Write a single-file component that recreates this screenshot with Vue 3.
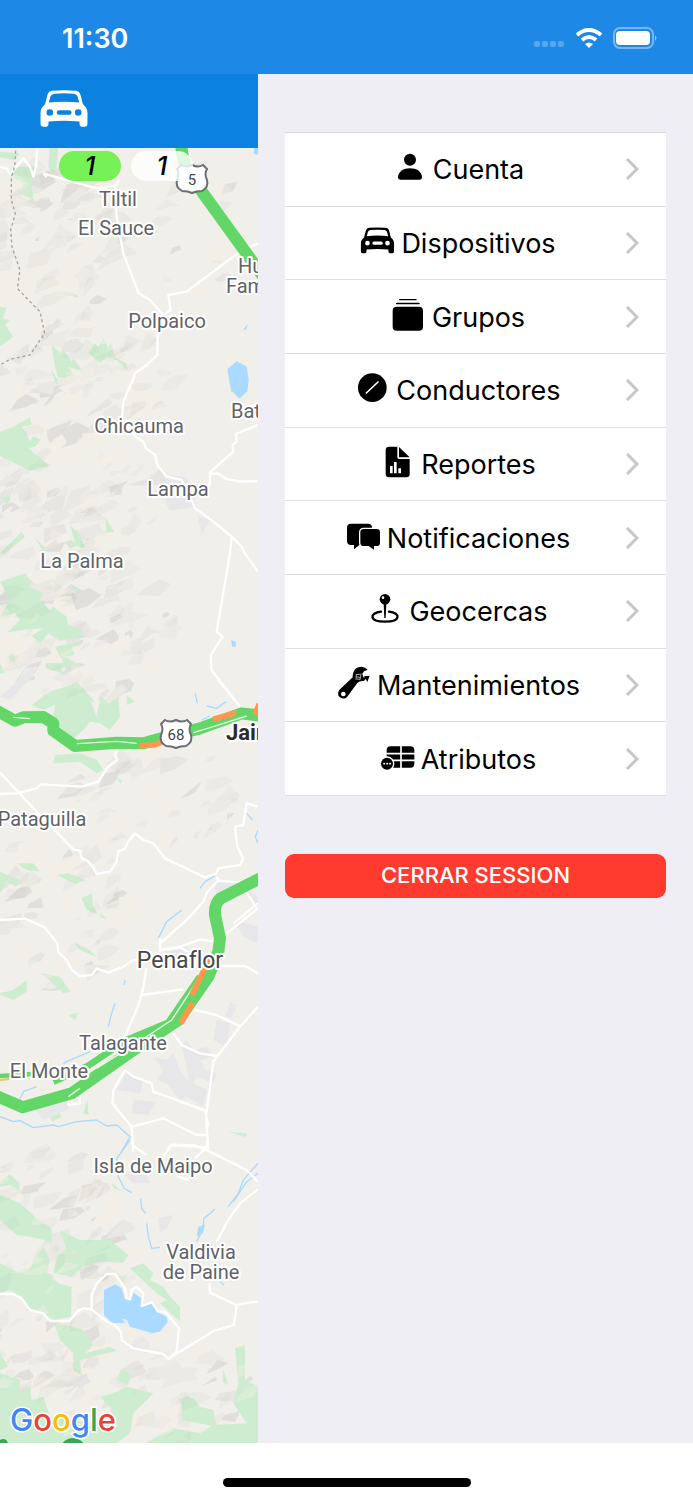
<template>
  <div class="phone">
    <header class="status-bar">
      <time class="clock">11:30</time>
      <div class="status-icons">
        <svg class="signal" viewBox="0 0 32 20">
          <rect v-for="n in 4" :key="n" :x="(n - 1) * 8 + 1" y="13" width="6" height="6" rx="2" />
        </svg>
        <svg class="wifi" viewBox="0 0 28 20">
          <path d="M2 7Q14 -3 26 7" />
          <path d="M7 12Q14 6 21 12" />
          <path class="wifi-dot" d="M10 16Q14 13 18 16L14 20Z" />
        </svg>
        <svg class="battery" viewBox="0 0 44 22">
          <rect class="battery-shell" x="1" y="1" width="39" height="20" rx="6" />
          <rect x="3" y="4" width="34" height="14" rx="4" />
          <path class="battery-cap" d="M42 8Q45 11 42 14Z" />
        </svg>
      </div>
    </header>

    <main class="content">
      <section class="map-pane">
        <div class="map-header">
          <svg class="car-logo" viewBox="0 0 144 112">
            <path fill-rule="evenodd" :d="carPath" />
          </svg>
        </div>

        <div class="map-body">
          <svg class="map" viewBox="0 0 258 1295" preserveAspectRatio="xMinYMin slice">
            <polygon v-for="(shard, i) in shards" :key="`s${i}`" :points="shard.points" :fill="shard.color" />

            <g v-for="area in areas" :key="area.top" :transform="`translate(0 ${area.top}) scale(.33333)`">
              <polygon v-for="(p, i) in area.greens" :key="`g${i}`" class="green" :points="p" />
              <polygon v-for="(p, i) in area.urban" :key="`u${i}`" class="urban" :points="p" />
            </g>

            <polygon v-for="(shard, i) in shades" :key="`h${i}`" :class="i % 2 ? 'shade' : 'light'" :points="shard.points" />

            <g v-for="area in areas" :key="area.top" :transform="`translate(0 ${area.top}) scale(.33333)`">
              <polygon v-for="(p, i) in area.lakes" :key="`l${i}`" class="lake" :points="p" />
              <path v-for="(d, i) in area.rivers" :key="`v${i}`" class="river" :d="d" />
              <path v-for="(d, i) in area.roads" :key="`r${i}`" class="road" :d="d" />
            </g>

            <!-- provincial border -->
            <path class="border-line" transform="translate(0 -78) scale(.33333)" d="M48 225L44 290L34 320L34 390L46 430L32 480L36 530L60 600L52 655L85 690L120 725L134 790L90 855L30 868L0 885" />

            <!-- route 5 -->
            <path class="traffic" transform="translate(0 -78) scale(.33333)" d="M544 220Q544 290 595 350L790 620" />
            <!-- route 68 -->
            <g transform="translate(0 532) scale(.33333)">
              <path class="traffic" d="M-10 92L45 122L70 112L130 111L160 130L160 152L225 198L350 188L430 190L520 165L600 145L725 100L790 108" />
              <path class="lane" d="M230 191L350 184L410 190M580 158L640 140L740 108M40 112L90 116" />
              <path class="jam" d="M418 197L462 195L490 185M640 118L708 98M764 104L778 72" />
            </g>
            <!-- route 78 -->
            <g transform="translate(0 712) scale(.33333)">
              <path class="traffic" d="M790 50L662 115Q643 130 645 165L660 235L655 275L625 350L535 480L400 570L215 700L68 742L-10 708" />
              <path class="traffic side" d="M600 350L505 488L380 540L260 620L160 665" />
              <path class="traffic thin" d="M0 648L95 642" />
              <path class="lane" d="M600 350L515 480L440 530L290 625M205 710L240 685" />
              <path class="jam" d="M635 285L575 405M578 428L542 490" />
              <path class="slow" d="M0 660L28 657" />
            </g>

            <g v-for="shield in shields" :key="shield.name" :transform="`translate(${shield.x} ${shield.y})`">
              <path class="shield" d="M-11 -14Q-6 -11 0 -14Q6 -11 11 -14L15 -10Q12 -5 15 1Q17 8 10 12Q4 12 0 14Q-4 12 -10 12Q-17 8 -15 1Q-12 -5 -15 -10Z" />
              <text class="shield-text" y="6">{{ shield.name }}</text>
            </g>

            <text v-for="label in labels" :key="label.text" :class="['label', label.kind]" :x="label.x" :y="label.y">{{ label.text }}</text>

            <circle class="marker" cx="73" cy="1303" r="13" />
            <circle class="marker" cx="3" cy="1296" r="5" />
            <text class="google" x="10" y="1283"><tspan class="b">G</tspan><tspan class="r">o</tspan><tspan class="y">o</tspan><tspan class="b">g</tspan><tspan class="g">l</tspan><tspan class="r">e</tspan></text>
          </svg>

          <div class="counters">
            <span class="counter online">1</span>
            <span class="counter">1</span>
          </div>
        </div>
      </section>

      <aside class="drawer">
        <nav class="menu">
          <a v-for="item in items" :key="item.label" class="menu-row" href="#">
            <span class="menu-label">
              <svg class="menu-icon" viewBox="0 0 102 108">
                <template v-if="item.icon === 'person'">
                  <circle cx="54" cy="26" r="18" />
                  <path d="M18 79C18 62 35 52 54 52S90 62 90 79Q90 86 82 86H26Q18 86 18 79Z" />
                </template>
                <path v-else-if="item.icon === 'car'" transform="translate(2 7) scale(.7)" fill-rule="evenodd" :d="carPath" />
                <template v-else-if="item.icon === 'groups'">
                  <rect x="24" y="0" width="53" height="4" rx="2" />
                  <rect x="15" y="11" width="71" height="5" rx="2" />
                  <rect x="5" y="23" width="91" height="72" rx="12" />
                </template>
                <template v-else-if="item.icon === 'driver'">
                  <circle cx="52" cy="47" r="43" />
                  <path class="cut" d="M34 63L69 30" />
                </template>
                <template v-else-if="item.icon === 'report'">
                  <path d="M27 2H52V34Q52 39 57 39H89V84Q89 94 79 94H27Q17 94 17 84V12Q17 2 27 2Z" />
                  <path d="M57 3L89 34H57Z" />
                  <path class="bars" d="M34 82V60M46 82V48M59 82V67" />
                </template>
                <template v-else-if="item.icon === 'chat'">
                  <path d="M15 11H66Q78 11 78 23V63Q78 75 66 75H40L24 88V75H15Q3 75 3 63V23Q3 11 15 11Z" />
                  <path class="ringed" d="M54 25H92Q104 25 104 37V68Q104 80 92 80H86V93L67 80H54Q41 80 41 68V37Q41 25 54 25Z" />
                </template>
                <template v-else-if="item.icon === 'pin'">
                  <path class="line" d="M39 56C3 60 3 86 51 86S99 60 63 56" />
                  <path d="M47 32H55L53 75H49Z" />
                  <circle cx="51" cy="19" r="16" />
                  <circle class="hole" cx="45" cy="14" r="4" />
                </template>
                <template v-else-if="item.icon === 'wrench'">
                  <path d="M9 70L50 31C50 10 60 -1 77 -1Q88 0 95 8L84 13L79 20L82 31L91 32L84 42Q70 41 64 48L36 86C29 99 11 96 7 85Q5 77 9 70Z" />
                  <path d="M84 28L94 45L101 26Z" />
                  <circle class="hole" cx="22" cy="81" r="7" />
                  <path class="etch" d="M60 23L76 21M60 29L74 32M61 22L60 38M75 22L72 38M62 36L72 37" />
                </template>
                <template v-else>
                  <rect x="20" y="16" width="83" height="64" rx="12" />
                  <path class="grid" d="M20 38H103M20 58H103M63 16V80" />
                  <circle class="hole" cx="21" cy="68" r="22" />
                  <circle cx="21" cy="68" r="18" />
                  <path class="dots" d="M12 68h1M21 68h1M30 68h1" />
                </template>
              </svg>
              <span>{{ item.label }}</span>
            </span>
            <svg class="chevron" viewBox="0 0 14 22">
              <path d="M2 1L12 11L2 21" />
            </svg>
          </a>
        </nav>
        <button class="logout" type="button">CERRAR SESSION</button>
      </aside>
    </main>

    <footer class="home-bar">
      <span class="home-indicator"></span>
    </footer>
  </div>
</template>

<script setup>
const carPath =
  'M1 70C1 60 4 54 9 49L15 42L20 22C23 8 28 2 38 2Q72 -1 106 2C116 2 121 8 124 22L129 42L135 49C140 54 143 60 143 70V104Q143 111 136 111H126Q119 111 119 104V95Q72 91 25 95V104Q25 111 18 111H8Q1 111 1 104Z' +
  'M26 38L31 20Q33 12 42 11Q72 9 102 11Q111 12 113 20L118 38Q72 33 26 38Z' +
  'M19 68A10 10 0 1 0 39 68A10 10 0 1 0 19 68Z' +
  'M105 68A10 10 0 1 0 125 68A10 10 0 1 0 105 68Z' +
  'M57 61H88Q95 61 95 68T88 75H57Q50 75 50 68T57 61Z'

const items = [
  { label: 'Cuenta', icon: 'person' },
  { label: 'Dispositivos', icon: 'car' },
  { label: 'Grupos', icon: 'groups' },
  { label: 'Conductores', icon: 'driver' },
  { label: 'Reportes', icon: 'report' },
  { label: 'Notificaciones', icon: 'chat' },
  { label: 'Geocercas', icon: 'pin' },
  { label: 'Mantenimientos', icon: 'wrench' },
  { label: 'Atributos', icon: 'table' }
]

const shields = [
  { name: '5', x: 192, y: 31 },
  { name: '68', x: 176, y: 586 }
]

const labels = [
  { text: 'Tiltil', x: 118, y: 58 },
  { text: 'El Sauce', x: 116, y: 87 },
  { text: 'Hu', x: 238, y: 125, kind: 'start' },
  { text: 'Fam', x: 226, y: 145, kind: 'start' },
  { text: 'Polpaico', x: 167, y: 180 },
  { text: 'Bat', x: 231, y: 270, kind: 'start' },
  { text: 'Chicauma', x: 139, y: 285 },
  { text: 'Lampa', x: 178, y: 348 },
  { text: 'La Palma', x: 82, y: 420 },
  { text: 'Jain', x: 226, y: 592, kind: 'bold' },
  { text: 'Pataguilla', x: 42, y: 678 },
  { text: 'Penaflor', x: 180, y: 820, kind: 'big' },
  { text: 'Talagante', x: 123, y: 902 },
  { text: 'El Monte', x: 49, y: 930 },
  { text: 'Isla de Maipo', x: 153, y: 1025 },
  { text: 'Valdivia', x: 201, y: 1111 },
  { text: 'de Paine', x: 201, y: 1131 }
]

const areas = [
  {
    top: -78,
    greens: [
      '150,225 175,225 170,290 155,310 145,290',
      '0,245 60,250 40,270 0,262',
      '45,290 110,290 95,340 100,390 60,370 70,340 35,320',
      '0,710 20,715 8,745 30,750 15,765 40,800 0,830',
      '155,825 180,850 190,840 215,875 220,865 250,905 205,890 220,915 175,925 165,890',
      '265,850 285,820 295,830 310,805 325,835 332,820 350,870 320,860 300,880',
      '340,860 380,880 380,900',
      '150,895 175,930 170,945'
    ],
    lakes: ['682,898 710,874 740,890 746,930 742,965 694,965', '730,778 744,762 738,780', '762,234 774,234 774,254 762,252'],
    roads: [
      'M345 345L350 440L370 550L415 668L450 690L490 735L474 780L472 855L440 885L405 910L385 965',
      'M774 520L720 545L560 665L505 675L512 720L490 735',
      'M0 290L20 296L32 312L70 265L90 290L100 320L108 290L112 225',
      'M130 310L200 330L290 355L345 348L357 330M130 310L140 322'
    ]
  },
  {
    top: 232,
    greens: [
      '0,155 40,140 90,112 95,135 65,140 80,160 90,185 100,168 122,180 105,200 85,205 148,258 90,272 0,228',
      '0,350 30,350 25,375',
      '315,410 342,455 320,458',
      '210,435 240,465 255,505 190,490 225,485',
      '105,475 150,515 130,515',
      '0,520 65,455 75,470 10,525',
      '0,605 75,580 95,605 85,620 130,640 120,660 150,690 160,680 200,710 205,735 248,755 248,770 180,782 145,760 120,790 95,768 130,745 65,750 20,758 60,720 45,700 0,710 30,660',
      '165,800 240,785 215,805 225,825 195,830 240,855 180,865 200,885 137,865 137,850 190,848',
      '20,830 40,820 52,860',
      '0,850 15,880 0,880',
      '130,945 180,935 230,905 285,965 130,965',
      '205,635 235,625 230,638'
    ],
    urban: ['500,285 560,290 590,380 510,392 498,370', '592,408 632,420 605,460', '0,950 100,860 105,880 30,960'],
    lakes: ['694,0 742,0 740,35 718,56 698,35', '693,780 708,785 707,800 697,800'],
    roads: [
      'M398 0L370 65L366 120L405 168L430 185L438 205L465 225L472 255L500 290L545 300L575 360L585 385L640 425L695 470L725 500L735 520L774 575',
      'M774 135L708 162L710 185L698 195L700 215L632 275L628 320M632 280L655 282L680 297L720 304L774 303',
      'M695 470L690 520L650 755L668 770L633 825L634 870L705 960'
    ]
  },
  {
    top: 532,
    greens: [
      '95,75 150,35 230,10 215,30 250,30 270,60 290,110 300,60 300,45 325,70 355,50 360,110 330,150 300,130 270,125 250,150 220,175 190,150 160,110 165,75 130,90',
      '380,45 405,65 380,75',
      '165,225 240,220 290,240 310,270 290,280 240,245 160,250',
      '50,550 100,550 120,575 80,570',
      '0,575 60,600 50,620 20,605 0,640',
      '170,585 205,580 258,600 225,612',
      '245,655 275,640 280,680 295,705 260,690',
      '300,695 320,718 300,712',
      '225,790 270,810 290,830 240,810',
      '350,295 365,300 362,312'
    ],
    urban: ['640,610 720,605 774,650 774,690 740,640 650,640', '700,720 774,740 774,790 730,770'],
    rivers: ['M585 40L592 70M620 78L650 85L678 65M605 120L630 108M600 625L615 605L645 588M475 775L500 725L545 690M740 400L758 420M774 450L766 470L774 490'],
    roads: [
      'M655 0L720 80',
      'M0 342L50 340L110 325L122 313L245 320L295 305L325 260L352 240L345 225L352 205',
      'M0 278L110 395L220 508L240 512L245 535L265 545L278 560L290 582L330 575L350 545L355 515L375 505L385 485L405 460L430 480L460 490L495 535L615 592L650 580L655 565L720 555L730 535L712 500L705 440L730 435L740 370L774 380',
      'M650 590L655 602L720 608L774 690M655 600L620 640L610 665L560 720L480 790L482 815M774 670L700 730'
    ]
  },
  {
    top: 712,
    greens: [
      '0,400 40,390 80,360 80,395 40,420 0,405',
      '125,340 180,350 212,395 190,400',
      '205,465 235,458 225,480',
      '150,770 180,760 185,772 155,785',
      '250,760 262,720 266,765',
      '685,815 740,820 738,832'
    ],
    urban: [
      '500,265 560,260 580,290 490,290',
      '545,555 560,540 580,570 620,560 640,590 600,600 615,630 650,640 640,670 590,650 570,680 560,620',
      '460,590 500,600 520,580 540,630 560,660 620,690 610,740 560,710 540,720 500,670 470,660 490,630',
      '690,425 710,435 695,475 675,470',
      '380,640 430,660 420,700 350,690',
      '400,720 470,725 445,765 395,760',
      '650,480 690,490 680,560 640,540',
      '100,740 200,720 210,745 130,780'
    ],
    rivers: [
      'M0 770L40 785L60 782L100 803L160 795L175 800L230 785L290 780L320 798L350 795L390 830L365 875',
      'M345 430L335 460L325 500M375 360L372 375',
      'M50 740L70 695L110 680M190 612L200 605L270 575'
    ],
    roads: [
      'M0 180L75 176L135 203L172 250L175 275L200 300L215 330L240 348L275 345L290 325L325 338L370 320L400 300L430 300',
      'M480 235L480 270L540 260L600 238L640 245M500 270L540 262L580 285',
      'M440 325L425 405L410 450L365 550M425 405L550 388',
      'M520 520L545 555L600 580L650 588M585 450L650 465L722 500',
      'M774 440L720 500L640 605L618 770L625 870M615 750L625 800',
      'M375 630L340 690L337 730L370 770L395 800L400 875M375 630L400 650L455 670L460 695L615 752',
      'M395 800L490 775L590 825L620 825M500 870L515 855L620 862',
      'M665 318L735 318L774 340M680 220L774 145M205 715L205 735L240 730L240 705'
    ]
  },
  {
    top: 992,
    greens: [
      '0,125 30,103 58,130 58,150 30,135 0,140',
      '0,165 60,190 110,235 155,270 155,305 90,290 50,285 0,240',
      '180,270 240,300 330,300 385,345 370,368 300,365 250,380 215,410 160,400 170,350 200,330',
      '0,370 50,395 90,380 110,345 130,320 150,360 140,400 175,430 215,440 213,530 160,540 130,520 80,500 65,470 30,450 0,460',
      '390,385 430,370 460,400 450,420 490,440 510,470 540,500 540,545 480,490 500,480 470,460',
      '160,545 250,570 280,615 255,640 330,620 350,632 240,660 245,705 220,690 220,640 180,600',
      '300,770 340,760 380,740 460,760 400,820 390,880 350,909 0,909 0,700 60,720 60,760 90,740 95,780 130,770 150,830 280,850 340,840 330,800',
      '365,685 395,705 380,735 350,720',
      '705,625 735,615 735,720 774,740 774,909 440,909 480,885 520,865 600,880 640,855 740,850 700,790 715,730',
      '545,780 580,775 600,800 640,810 650,860 545,840',
      '335,128 365,153 340,145',
      '350,410 380,405 370,440',
      '0,640 25,680 0,690',
      '670,690 685,735 668,725'
    ],
    urban: ['400,600 430,590 450,610 440,640 395,630', '475,235 520,225 500,265 480,280', '370,100 440,105 450,130 400,130'],
    lakes: ['312,450 345,433 365,445 375,478 395,475 400,458 425,475 425,500 455,487 470,515 500,530 503,545 480,575 455,579 390,560 380,540 365,535 375,550 335,548 312,525', '595,260 615,255 608,280 590,290'],
    rivers: ['M390 0L350 55L355 110L372 145L395 158', 'M422 175L425 205L437 220M440 250L445 290L455 325L480 322', 'M645 208L612 235L608 270L590 305', 'M774 70L730 120L715 160L685 200M774 100L740 125L700 185', 'M660 425L672 434'],
    roads: [
      'M0 462L38 462L65 475L90 510L130 520L150 543L208 543L235 512L250 505L275 508L275 465L290 430L320 402L345 402L362 425L375 445L380 475L390 478L395 450L410 440L430 460L425 498L455 487L475 515L495 515L537 565L530 635L505 656',
      'M275 508L320 545L345 555L362 575L365 600L400 625L490 642L505 656L640 573L702 555L710 495L745 488L774 485',
      'M710 495L630 458L628 430M774 148L720 190L685 240L650 305',
      'M395 0L400 18L440 45M490 50L515 14L585 16L640 40L740 90L774 125M585 55L622 20L622 0M530 108L560 118L580 100'
    ]
  }
]

// hill relief: seeded so that the terrain is the same on each load
let seed = 7
const random = () => {
  seed = (seed * 16807) % 2147483647
  return seed / 2147483647
}

const hills = [
  { x: 60, y: 90, rx: 65, ry: 80, count: 60 },
  { x: 200, y: 90, rx: 50, ry: 70, count: 16 },
  { x: 85, y: 230, rx: 90, ry: 65, count: 75 },
  { x: 70, y: 360, rx: 85, ry: 70, count: 70 },
  { x: 85, y: 480, rx: 90, ry: 70, count: 75 },
  { x: 150, y: 650, rx: 95, ry: 50, count: 34 },
  { x: 60, y: 760, rx: 70, ry: 85, count: 50 },
  { x: 50, y: 1120, rx: 85, ry: 130, count: 120 },
  { x: 140, y: 1240, rx: 140, ry: 55, count: 70 }
]
const colors = ['#ebeae5', '#ebeae5', '#e9e8e3', '#f3efe7', '#f2efe7', '#e6e5e1', '#e0dfdb']

const createShards = (share) =>
  hills.flatMap((hill) =>
    Array.from({ length: Math.round(hill.count * share) }, () => {
      const angle = random() * Math.PI * 2
      const reach = Math.sqrt(random())
      const x = hill.x + Math.cos(angle) * reach * hill.rx
      const y = hill.y + Math.sin(angle) * reach * hill.ry
      const size = 4 + random() * 12
      const points = [
        [x - size * (0.5 + random()), y + size * (0.1 + random())],
        [x - size * random(), y - size * random() * 0.5],
        [x + size * random(), y - size * (0.4 + random() * 0.6)],
        [x + size * (0.4 + random()), y - size * random() * 0.4],
        [x + size * 0.3, y + size * random() * 0.6]
      ]
      return {
        points: points.map((p) => p.map(Math.round).join(',')).join(' '),
        color: colors[Math.floor(random() * colors.length)]
      }
    })
  )

const shards = createShards(1)
const shades = createShards(0.5)
</script>

<style>
body {
  margin: 0;
}
</style>

<style scoped>
.phone {
  display: flex;
  flex-direction: column;
  min-height: 100vh;
  background: #fff;
  font-family: Inter, "Liberation Sans", sans-serif;
}

.status-bar {
  display: flex;
  justify-content: space-between;
  align-items: center;
  box-sizing: border-box;
  height: 74px;
  padding: 2px 36px 0 62px;
  background: #1e88e6;
  color: #fff;
}

.clock {
  font-size: 27px;
  font-weight: 600;
}

.status-icons {
  display: flex;
  align-items: center;
  gap: 10px;
}

.status-icons svg {
  fill: #fff;
}

.signal {
  width: 32px;
  height: 20px;
  opacity: 0.25;
}

.wifi {
  width: 28px;
  height: 20px;
}

.wifi path {
  fill: none;
  stroke: #fff;
  stroke-width: 4;
}

.wifi .wifi-dot {
  fill: #fff;
  stroke: none;
}

.battery {
  width: 44px;
  height: 22px;
}

.battery .battery-shell {
  fill: none;
  stroke: #fff;
  stroke-width: 2;
  opacity: 0.4;
}

.battery-cap {
  opacity: 0.5;
}

.content {
  display: grid;
  flex: 1;
  grid-template-columns: 258px 1fr;
}

.map-pane {
  display: flex;
  flex-direction: column;
}

.map-header {
  display: flex;
  align-items: center;
  box-sizing: border-box;
  height: 74px;
  padding: 0 40px 6px;
  background: #0c82e0;
}

.car-logo {
  width: 48px;
  height: 37px;
  fill: #fff;
}

.map-body {
  position: relative;
  flex: 1;
  overflow: hidden;
  background: #f0efea;
}

.map {
  position: absolute;
  width: 100%;
  height: 100%;
}

.green {
  fill: #ceedd0;
}

.urban {
  fill: #e7e7e9;
}

.lake {
  fill: #aadaff;
}

.shade {
  fill: #5a5a46;
  opacity: 0.04;
}

.light {
  fill: #f5f0e6;
  opacity: 0.35;
}

.river,
.road,
.lane,
.border-line,
.traffic,
.jam,
.slow {
  fill: none;
  stroke-linejoin: round;
}

.river {
  stroke: #aadaff;
  stroke-width: 4;
}

.road {
  stroke: #fff;
  stroke-width: 7;
}

.lane {
  stroke: #e8f5e4;
  stroke-width: 4;
}

.border-line {
  stroke: #a5a5a5;
  stroke-width: 4;
  stroke-dasharray: 9 8;
}

.traffic {
  stroke: #63d668;
  stroke-width: 36;
}

.side {
  stroke-width: 20;
}

.thin {
  stroke-width: 14;
}

.jam {
  stroke: #ff974d;
  stroke-width: 17;
}

.slow {
  stroke: #f5c35c;
  stroke-width: 6;
}

.shield {
  fill: #fff;
  stroke: #6b6e72;
  stroke-width: 2;
}

.shield-text {
  font: 15px Roboto, sans-serif;
  text-anchor: middle;
  fill: #44474a;
}

.label {
  font: 20px Roboto, sans-serif;
  font-variant-ligatures: none;
  text-anchor: middle;
  fill: #5f6368;
  stroke: #fff;
  stroke-width: 4px;
  stroke-linejoin: round;
  paint-order: stroke;
}

.label.start {
  text-anchor: start;
}

.label.bold {
  font-size: 22px;
  font-weight: 700;
  text-anchor: start;
  fill: #2b2b2b;
}

.label.big {
  font-size: 23px;
  fill: #46484b;
}

.marker {
  fill: #34a853;
}

.google {
  font: 500 31px Inter, sans-serif;
  stroke: #fff;
  stroke-width: 3px;
  paint-order: stroke;
}

.google .b {
  fill: #4285f4;
}

.google .r {
  fill: #ea4335;
}

.google .y {
  fill: #fbbc05;
}

.google .g {
  fill: #34a853;
}

.counters {
  position: absolute;
  top: 3px;
  left: 59px;
  display: flex;
  gap: 10px;
}

.counter {
  width: 62px;
  border-radius: 15px;
  background: rgba(255, 255, 255, 0.8);
  font-size: 26px;
  font-style: italic;
  font-weight: 500;
  line-height: 30px;
  text-align: center;
}

.counter.online {
  background: rgba(100, 242, 66, 0.88);
}

.drawer {
  padding: 58px 27px;
  background: #efeef4;
}

.menu {
  display: grid;
  grid-auto-rows: 1fr;
  min-height: 664px;
  box-sizing: border-box;
  border-top: 1px solid #d8d8dc;
  background: #fff;
}

.menu-row {
  display: flex;
  align-items: center;
  gap: 14px;
  padding: 0 27px 0 20px;
  border-bottom: 1px solid #dddddf;
  color: #000;
  text-decoration: none;
}

.menu-label {
  display: flex;
  flex: 1;
  justify-content: center;
  align-items: center;
  gap: 7px;
  font-size: 27px;
  line-height: 36px;
  white-space: nowrap;
}

.menu-label span {
  padding-top: 2px;
}

.menu-icon {
  width: 34px;
  height: 36px;
  overflow: visible;
}

.menu-icon .hole {
  fill: #fff;
}

.menu-icon .cut,
.menu-icon .bars,
.menu-icon .grid,
.menu-icon .dots {
  fill: none;
  stroke: #fff;
  stroke-width: 5;
  stroke-linecap: round;
}

.menu-icon .bars {
  stroke-width: 8;
  stroke-linecap: butt;
}

.menu-icon .ringed {
  stroke: #fff;
  stroke-width: 4;
}

.menu-icon .line {
  fill: none;
  stroke: #000;
  stroke-width: 7;
  stroke-linecap: round;
}

.menu-icon .etch {
  fill: none;
  stroke: #aaa;
  stroke-width: 3;
}

.chevron {
  width: 14px;
  height: 22px;
  fill: none;
  stroke: #c7c7c9;
  stroke-width: 3;
}

.logout {
  display: block;
  width: 100%;
  height: 44px;
  margin-top: 58px;
  padding: 0 0 2px;
  border: 0;
  border-radius: 9px;
  background: #ff3b30;
  color: #fff;
  font-family: inherit;
  font-size: 22px;
  font-weight: 500;
}

.home-bar {
  display: flex;
  justify-content: center;
  align-items: flex-end;
  box-sizing: border-box;
  height: 57px;
  padding-bottom: 13px;
}

.home-indicator {
  width: 248px;
  height: 9px;
  border-radius: 5px;
  background: #000;
}
</style>
